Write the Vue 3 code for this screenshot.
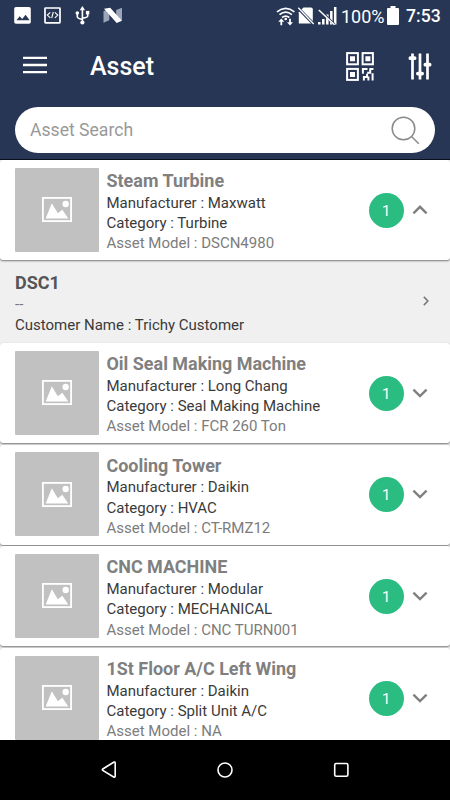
<script setup>
const assets = [
  { name: 'Steam Turbine', maker: 'Maxwatt', category: 'Turbine', model: 'DSCN4980', count: 1, open: true,
    children: [{ code: 'DSC1', note: '--', customer: 'Trichy Customer' }] },
  { name: 'Oil Seal Making Machine', maker: 'Long Chang', category: 'Seal Making Machine', model: 'FCR 260 Ton', count: 1 },
  { name: 'Cooling Tower', maker: 'Daikin', category: 'HVAC', model: 'CT-RMZ12', count: 1 },
  { name: 'CNC MACHINE', maker: 'Modular', category: 'MECHANICAL', model: 'CNC TURN001', count: 1 },
  { name: '1St Floor A/C Left Wing', maker: 'Daikin', category: 'Split Unit A/C', model: 'NA', count: 1 },
]
</script>

<template>
  <div class="screen">
    <header class="top">
      <div class="status">
        <svg class="status-left" width="110" height="20" viewBox="0 0 110 20" fill="none">
          <rect x="0.2" y="1" width="16.6" height="16.8" rx="1.8" fill="#fff" />
          <path d="M2.5 14.3l3.2-4 2.5 2.8 3.4-4.4 4 5.6z" fill="#283655" />
          <rect x="31" y="2" width="15" height="14.8" rx="0.5" stroke="#fff" stroke-width="1.7" />
          <path d="M36.3 6.3l-3 2.8 3 2.8M40.8 6.3l3 2.8-3 2.8M39.3 6l-1.6 6.2" stroke="#fff" stroke-width="1.1" />
          <path d="M68.4 3v13M63.3 8v2.7q0 1.6 5 2.7M73.7 7.5v2.6q0 1.5-5.2 2.2" stroke="#fff" stroke-width="1.6" />
          <path d="M68.4 0l2.7 4.2h-5.4z" fill="#fff" />
          <circle cx="68.4" cy="16.5" r="2.1" fill="#fff" />
          <circle cx="63.3" cy="7" r="1.8" fill="#fff" />
          <rect x="71.9" y="4.9" width="3.4" height="3.5" fill="#fff" />
          <path d="M89.5 5.2l5.8-2.8v11.8l-5.8 2.6zM102.2 4l5.8-2.2v12l-5.8 2.6z" fill="#9ba4b8" />
          <path d="M90 2.7l6.2-1L108 14.8l-5.3 2.3z" fill="#fff" />
        </svg>
        <div class="status-right">
          <svg width="62" height="22" viewBox="0 0 62 22" fill="none">
            <g stroke="#fff" stroke-width="1.7">
              <path d="M1 6.8q8.7-7 17.4 0M3.5 9.7q6.2-5 12.4 0M6.1 12.5q3.6-2.8 7.2 0" />
            </g>
            <path d="M5.3 13.5l3 3.3H6.2v3.4H4.4v-3.4H2.3zM14 20.5l-3-3.3h2.1v-3.4h1.8v3.4H17z" fill="#fff" />
            <circle cx="9.7" cy="14" r="1.3" fill="#fff" />
            <path d="M27.5 2.5H35q1.8 0 1.8 1.8v14.2h-14V7.2z" fill="#fff" />
            <path d="M22.5 3.5l15 15.4" stroke="#283655" stroke-width="3" />
            <path d="M22.3 2.8l15.4 16.2" stroke="#fff" stroke-width="1.3" />
            <path d="M43.3 19.6V17M47.3 19.6v-5.5M51.3 19.6V9.6M55.3 19.6V6M59.2 19.6V2" stroke="#fff" stroke-width="2.5" />
            <path d="M43 4l15.5 15.5" stroke="#283655" stroke-width="2.4" />
            <path d="M42.8 5L58.5 19.8" stroke="#fff" stroke-width="1.5" />
          </svg>
          <span class="pct">100%</span>
          <svg class="battery" width="12" height="19" viewBox="0 0 12 19">
            <path d="M3.5 0h5v2.1H11q1 0 1 1V18q0 1-1 1H1q-1 0-1-1V3.1q0-1 1-1h2.5z" fill="#fff" />
          </svg>
          <span class="clock">7:53</span>
        </div>
      </div>

      <div class="bar">
        <svg class="menu" width="24" height="18" viewBox="0 0 24 18">
          <path d="M0 1.8h24M0 9h24M0 16.1h24" stroke="#fff" stroke-width="2.3" />
        </svg>
        <h1>Asset</h1>
        <svg class="qr" width="28" height="29" viewBox="0 0 28 29" fill="none">
          <g stroke="#fff" stroke-width="2">
            <rect x="1.1" y="1.1" width="10.8" height="11.2" />
            <rect x="16.6" y="1.1" width="10.3" height="11.2" />
            <rect x="1.1" y="16.9" width="10.8" height="11" />
          </g>
          <path d="M4 4.2h5v5H4zM19.4 4.2h5v5h-5zM4 20h5v5H4z" fill="#fff" />
          <path d="M16.9 21.8v-4.9h4.6M23.4 17h4M24.2 17v3.8h-3M17.9 28.5v-3.4h3.2v-3.4M22.4 24.5v4M26.6 28.5v-7.2" stroke="#fff" stroke-width="2" />
        </svg>
        <svg class="tune" width="24" height="27" viewBox="0 0 24 27">
          <path d="M4.5 .5v26M12 .5v26M19.5 .5v26" stroke="#fff" stroke-width="2.7" />
          <path d="M2.4 5.2h4.2M9.9 20.6h4.2M17.4 11.7h4.2" stroke="#fff" stroke-width="3.8" stroke-linecap="round" />
        </svg>
      </div>

      <div class="search">
        <span>Asset Search</span>
        <svg width="29" height="29" viewBox="0 0 29 29" fill="none" stroke="#8a8a8a" stroke-width="1.5">
          <circle cx="12.5" cy="12.5" r="11.3" />
          <path d="M20.5 20.5l7.3 7.3" />
        </svg>
      </div>
    </header>

    <main class="list">
      <template v-for="a in assets" :key="a.name">
        <article class="card" :class="{ open: a.open }">
          <div class="thumb">
            <svg width="30" height="25" viewBox="0 0 30 25">
              <rect x="0.9" y="0.9" width="28.2" height="23.2" fill="none" stroke="#fff" stroke-width="1.8" />
              <path d="M3.7 21.5L9.8 6.2l6 10 4.5-3.5 6 8.8z" fill="#fff" />
              <circle cx="23.7" cy="7" r="3.2" fill="#fff" />
            </svg>
          </div>
          <div class="info">
            <h2>{{ a.name }}</h2>
            <p>Manufacturer : {{ a.maker }}</p>
            <p>Category : {{ a.category }}</p>
            <p class="model">Asset Model : {{ a.model }}</p>
          </div>
          <div class="badge">{{ a.count }}</div>
          <svg class="chev" width="16" height="10" viewBox="0 0 16 10" fill="none" stroke="#808080" stroke-width="2.4">
            <path :d="a.open ? 'M1.4 8.3L8 1.8l6.6 6.5' : 'M1.4 1.6L8 8.1l6.6-6.5'" />
          </svg>
        </article>
        <section v-for="c in a.children" :key="c.code" class="child">
          <div>
            <h3>{{ c.code }}</h3>
            <p class="note">{{ c.note }}</p>
            <p>Customer Name : {{ c.customer }}</p>
          </div>
          <svg width="6" height="10" viewBox="0 0 6 10" fill="none" stroke="#777" stroke-width="1.5">
            <path d="M.8 .9L4.9 5 .8 9.1" />
          </svg>
        </section>
      </template>
    </main>

    <nav class="nav">
      <svg width="16" height="18" viewBox="0 0 16 18"><path d="M14.2 2v13q0 1.5-1.6 1L1.8 9.4q-.9-.7 0-1.4L12.6 1.2q1.6-.7 1.6.8z" /></svg>
      <svg width="16" height="16" viewBox="0 0 16 16"><circle cx="8" cy="8" r="7" /></svg>
      <svg width="16" height="16" viewBox="0 0 16 16"><rect x="1.7" y="1.5" width="13.2" height="12.8" rx="1.6" /></svg>
    </nav>
  </div>
</template>

<style>
body { margin: 0; }
</style>

<style scoped>
.screen { width: 450px; height: 800px; display: flex; flex-direction: column; overflow: hidden; background: #f0f0f0; font-family: Roboto, sans-serif; }
svg { display: block; flex: none; }
h1, h2, h3, p { margin: 0; white-space: nowrap; }
.top { flex: none; height: 160px; box-sizing: border-box; background: #283655; border-bottom: 1px solid #0a0f1c; color: #fff; }
.status { height: 33px; display: flex; justify-content: space-between; box-sizing: border-box; padding: 6px 10px 0 14px; }
.status-right { display: flex; }
.status-right > svg:first-child { margin-top: -1px; }
.pct { font-size: 18px; line-height: 21px; margin-left: 3px; width: 44px; white-space: nowrap; }
.battery { margin: 0 0 0 2px; }
.clock { font-size: 17.6px; line-height: 21px; font-weight: 500; margin-left: 7px; width: 34px; white-space: nowrap; }
.bar { height: 66px; display: flex; align-items: center; padding-left: 23px; }
.menu { margin-top: -2px; }
h1 { font-size: 25px; font-weight: 500; margin-left: 43px; width: 256px; line-height: 30px; padding-top: 2px; }
.tune { margin-left: 34px; }
.search { margin: 8px 15px 0; height: 46px; border-radius: 23px; background: #fff; display: flex; align-items: center; justify-content: space-between; padding: 0 15.5px 0 15px; color: #999; font-size: 17.6px; }
.list { flex: 1; min-height: 0; overflow: hidden; background: #f0f0f0; }
.card { height: 100px; margin-bottom: 1.7px; background: #fff; border-radius: 3px; box-shadow: 0 1px 2px rgba(0, 0, 0, .5); display: flex; align-items: center; box-sizing: border-box; padding: 0 22px 1px 15px; position: relative; }
.card.open { margin-bottom: 0; }
.thumb { width: 84px; height: 84px; flex: none; border-radius: 1px; background: #c1c1c1; display: flex; align-items: center; justify-content: center; }
.info { flex: 1; align-self: flex-start; margin: 10px 0 0 7.5px; font-size: 15px; line-height: 20.4px; color: #3a3a3a; }
h2 { font-size: 17.95px; line-height: 22px; margin-bottom: .6px; font-weight: 700; color: #808080; }
.model { color: #7c7c7c; }
.badge { width: 35px; height: 35px; border-radius: 50%; background: #2bbc81; color: #fff; font-size: 15px; line-height: 36px; text-align: center; margin: 1px 8.3px 0 0; }
.child { height: 83px; box-sizing: border-box; display: flex; justify-content: space-between; padding: 11.5px 21px 0 15px; font-size: 15px; line-height: 20.4px; color: #3a3a3a; }
.child > svg { margin-top: 24.5px; }
h3 { font-size: 18px; line-height: 22px; margin-bottom: .6px; font-weight: 700; color: #555; }
.note { color: #777; }
.nav { flex: none; height: 60px; background: #000; display: flex; align-items: center; justify-content: space-between; padding: 0 101px; }
.nav svg { fill: none; stroke: #fff; stroke-width: 1.6; }
</style>
